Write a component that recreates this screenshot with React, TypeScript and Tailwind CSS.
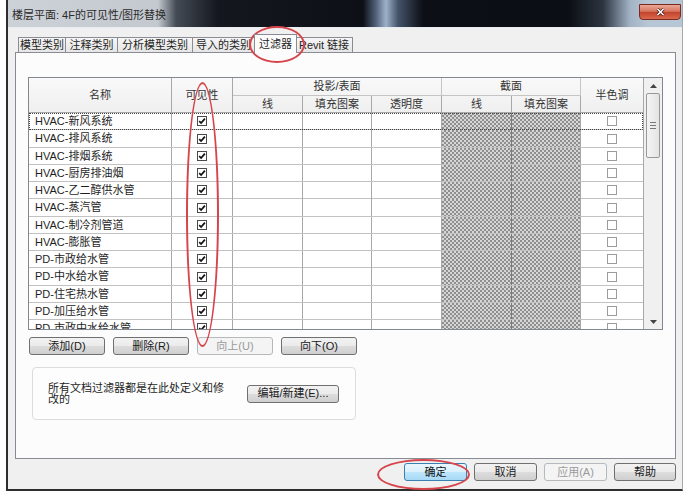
import React from 'react'

const filters = [
  'HVAC-新风系统',
  'HVAC-排风系统',
  'HVAC-排烟系统',
  'HVAC-厨房排油烟',
  'HVAC-乙二醇供水管',
  'HVAC-蒸汽管',
  'HVAC-制冷剂管道',
  'HVAC-膨胀管',
  'PD-市政给水管',
  'PD-中水给水管',
  'PD-住宅热水管',
  'PD-加压给水管',
  'PD-市政中水给水管',
]

const tabs = ['模型类别', '注释类别', '分析模型类别', '导入的类别', '过滤器', 'Revit 链接']
const tabWidths = ['w-[48px]', 'w-[52px]', 'w-[75px]', 'w-[62px]', 'w-[43px]', 'w-[57px]']

const hatch =
  'bg-[repeating-conic-gradient(#8f8f8f_0%_25%,#d6d6d6_0%_50%)] bg-size-[4px_4px]'

function Box({ checked }: { checked: boolean }) {
  return (
    <span
      className={`w-[10px] h-[10px] border bg-white flex items-center justify-center ${
        checked ? 'border-[#4a4a4a]' : 'border-[#9c9c9c]'
      }`}
    >
      {checked && (
        <svg width="8" height="8" viewBox="0 0 8 8">
          <path d="M1.2 4.2 L3.1 6.1 L6.9 1.6" stroke="#111" strokeWidth="1.7" fill="none" />
        </svg>
      )}
    </span>
  )
}

function Btn({
  children,
  className = '',
  disabled = false,
  primary = false,
}: {
  children: React.ReactNode
  className?: string
  disabled?: boolean
  primary?: boolean
}) {
  return (
    <div
      className={`h-[18px] flex items-center justify-center rounded-[3px] border text-[11px] leading-none ${
        primary
          ? 'border-[#3c7fb1] bg-[linear-gradient(#eaf6fd,#d9f0fc_50%,#bee6fd_50%,#a7d9f5)] text-[#111]'
          : disabled
            ? 'border-[#b5b9bc] bg-[#f4f4f4] text-[#9a9a9a]'
            : 'border-[#707070] bg-[linear-gradient(#f2f2f2,#ebebeb_50%,#dddddd_50%,#cfcfcf)] text-[#1a1a1a]'
      } ${className}`}
    >
      {children}
    </div>
  )
}

export default function App() {
  return (
    <div className="relative w-[689px] h-[496px] bg-white overflow-hidden font-['Liberation_Sans','Noto_Sans_CJK_SC',sans-serif] text-[#1e1e1e]">
      {/* window */}
      <div className="ml-[6px] w-[677px] h-[491px] flex flex-col border-l-2 border-b-2 border-r border-l-[#2e2e2e] border-b-[#2e2e2e] border-r-[#a8a8a8]">
        {/* title bar */}
        <div className="h-[28px] shrink-0 flex items-start justify-between border-b border-[#e8ecf0] bg-[linear-gradient(90deg,#cdd2d8_0px,#c4c9cf_150px,#454b55_168px,#14171e_210px,#0d1017_355px,#52627a_368px,#9db2c9_378px,#44536a_390px,#0c0f15_415px,#0b0e14_560px,#2c3440_595px,#a2b3c5_622px,#b7c6d4_640px)]">
          <span className="ml-[4px] mt-[7px] text-[11px] text-[#2a2a2a]">楼层平面: 4F的可见性/图形替换</span>
          <div className="mt-[4px] mr-[1px] w-[42px] h-[16px] rounded-b-[4px] border border-[#7a2a20] bg-[linear-gradient(#e9a797,#d7765f_45%,#c3432c_52%,#d9694d)] flex items-center justify-center">
            <svg width="9" height="8" viewBox="0 0 9 8">
              <path d="M1.5 1 L7.5 7 M7.5 1 L1.5 7" stroke="#3b1410" strokeWidth="3" />
              <path d="M1.5 1 L7.5 7 M7.5 1 L1.5 7" stroke="#fff" strokeWidth="1.6" />
            </svg>
          </div>
        </div>

        {/* body */}
        <div className="flex-1 bg-[#f0f0f0] pl-[7px] pr-[6px] pt-[6px] flex flex-col">
          {/* tabs */}
          <div className="h-[18px] flex items-end pl-[3px]">
            {tabs.map((t, i) =>
              t === '过滤器' ? (
                <div
                  key={t}
                  className={`${tabWidths[i]} relative z-10 h-[19px] -mb-[1px] -mx-[1px] border border-b-0 border-[#898c95] bg-[#fcfcfc] text-[11px] flex items-center justify-center`}
                >
                  {t}
                </div>
              ) : (
                <div
                  key={t}
                  className={`${tabWidths[i]} h-[15px] border border-b-0 border-l-0 first:border-l border-[#898c95] bg-[linear-gradient(#f6f6f6,#e6e6e6)] text-[11px] flex items-center justify-center`}
                >
                  {t}
                </div>
              )
            )}
          </div>

          {/* panel */}
          <div className="h-[407px] border border-[#898c95] bg-[#fcfcfc] pt-[24px] pl-[12px]">
            {/* table */}
            <div className="w-[635px] h-[253px] border border-[#828790] flex bg-white">
              <div className="w-[614px] flex flex-col">
                {/* header */}
                <div className="h-[35px] shrink-0 grid grid-cols-[143px_61px_70px_69px_70px_70px_69px_62px] grid-rows-[18px_17px] bg-[linear-gradient(#f9f9f9,#efefef)] text-[11px] text-[#333]">
                  <div className="row-span-2 border-r border-b border-[#a8a8a8] flex items-center justify-center">名称</div>
                  <div className="row-span-2 border-r border-b border-[#a8a8a8] flex items-center justify-center">可见性</div>
                  <div className="col-span-3 border-r border-b border-[#c4c4c4] flex items-center justify-center">投影/表面</div>
                  <div className="col-span-2 border-r border-b border-[#c4c4c4] flex items-center justify-center">截面</div>
                  <div className="row-span-2 border-b border-[#a8a8a8] flex items-center justify-center">半色调</div>
                  <div className="border-r border-b border-[#a8a8a8] flex items-center justify-center">线</div>
                  <div className="border-r border-b border-[#a8a8a8] flex items-center justify-center">填充图案</div>
                  <div className="border-r border-b border-[#a8a8a8] flex items-center justify-center">透明度</div>
                  <div className="border-r border-b border-[#a8a8a8] flex items-center justify-center">线</div>
                  <div className="border-r border-b border-[#a8a8a8] flex items-center justify-center">填充图案</div>
                </div>
                {/* rows */}
                <div className="flex-1 overflow-hidden">
                  {filters.map((f, i) => (
                    <div
                      key={f}
                      className={`h-[17.27px] grid grid-cols-[143px_61px_70px_69px_70px_70px_69px_62px] border-b border-[#c2c2c2] text-[11px] ${
                        i === 0 ? 'outline-1 outline-dotted outline-[#444] -outline-offset-1' : ''
                      }`}
                    >
                      <div className="border-r border-[#a8a8a8] pl-[6px] flex items-center whitespace-nowrap">{f}</div>
                      <div className="border-r border-[#a8a8a8] flex items-center justify-center">
                        <Box checked />
                      </div>
                      <div className="border-r border-[#a8a8a8]" />
                      <div className="border-r border-[#a8a8a8]" />
                      <div className="border-r border-[#a8a8a8]" />
                      <div className={`border-r border-[#7a7a7a] ${hatch}`} />
                      <div className={`border-r border-[#a8a8a8] ${hatch}`} />
                      <div className="flex items-center justify-center">
                        <Box checked={false} />
                      </div>
                    </div>
                  ))}
                </div>
              </div>

              {/* scrollbar */}
              <div className="w-[19px] border-l border-[#a8a8a8] bg-[#f0f0f0] flex flex-col items-center">
                <div className="h-[15px] w-full flex items-center justify-center">
                  <svg width="7" height="4" viewBox="0 0 7 4">
                    <path d="M0 4 L3.5 0 L7 4 Z" fill="#444" />
                  </svg>
                </div>
                <div className="w-[14px] h-[65px] rounded-[2px] border border-[#999] bg-[linear-gradient(90deg,#f4f4f4,#e4e4e4)] flex flex-col items-center justify-center gap-[2px]">
                  <span className="w-[6px] h-px bg-[#777]" />
                  <span className="w-[6px] h-px bg-[#777]" />
                  <span className="w-[6px] h-px bg-[#777]" />
                </div>
                <div className="flex-1" />
                <div className="h-[15px] w-full flex items-center justify-center">
                  <svg width="7" height="4" viewBox="0 0 7 4">
                    <path d="M0 0 L3.5 4 L7 0 Z" fill="#444" />
                  </svg>
                </div>
              </div>
            </div>

            {/* list buttons */}
            <div className="mt-[7px] ml-[1px] flex gap-[8px]">
              <Btn className="w-[76px]">添加(D)</Btn>
              <Btn className="w-[76px]">删除(R)</Btn>
              <Btn className="w-[76px]" disabled>
                向上(U)
              </Btn>
              <Btn className="w-[76px]">向下(O)</Btn>
            </div>

            {/* info box */}
            <div className="mt-[12px] ml-[4px] w-[324px] h-[53px] rounded-[4px] border border-[#dcdcdc] bg-[#fdfdfd] flex items-center">
              <p className="ml-[15px] w-[180px] text-[11px] leading-[11px]">所有文档过滤器都是在此处定义和修改的</p>
              <Btn className="ml-auto mr-[16px] w-[92px]">编辑/新建(E)...</Btn>
            </div>
          </div>

          {/* dialog buttons */}
          <div className="mt-[4px] flex justify-end gap-[7px]">
            <Btn className="w-[63px]" primary>
              确定
            </Btn>
            <Btn className="w-[63px]">取消</Btn>
            <Btn className="w-[63px]" disabled>
              应用(A)
            </Btn>
            <Btn className="w-[62px]">帮助</Btn>
          </div>
        </div>
      </div>

      {/* red annotation ellipses */}
      <div className="absolute left-[249px] top-[26px] w-[56px] h-[37px] rounded-[50%] border-2 border-[#d6454c]" />
      <div className="absolute left-[186px] top-[82px] w-[33px] h-[265px] rounded-[50%] border-2 border-[#d6454c]" />
      <div className="absolute left-[377px] top-[459px] w-[93px] h-[31px] rounded-[50%] border-2 border-[#d6454c]" />
    </div>
  )
}
